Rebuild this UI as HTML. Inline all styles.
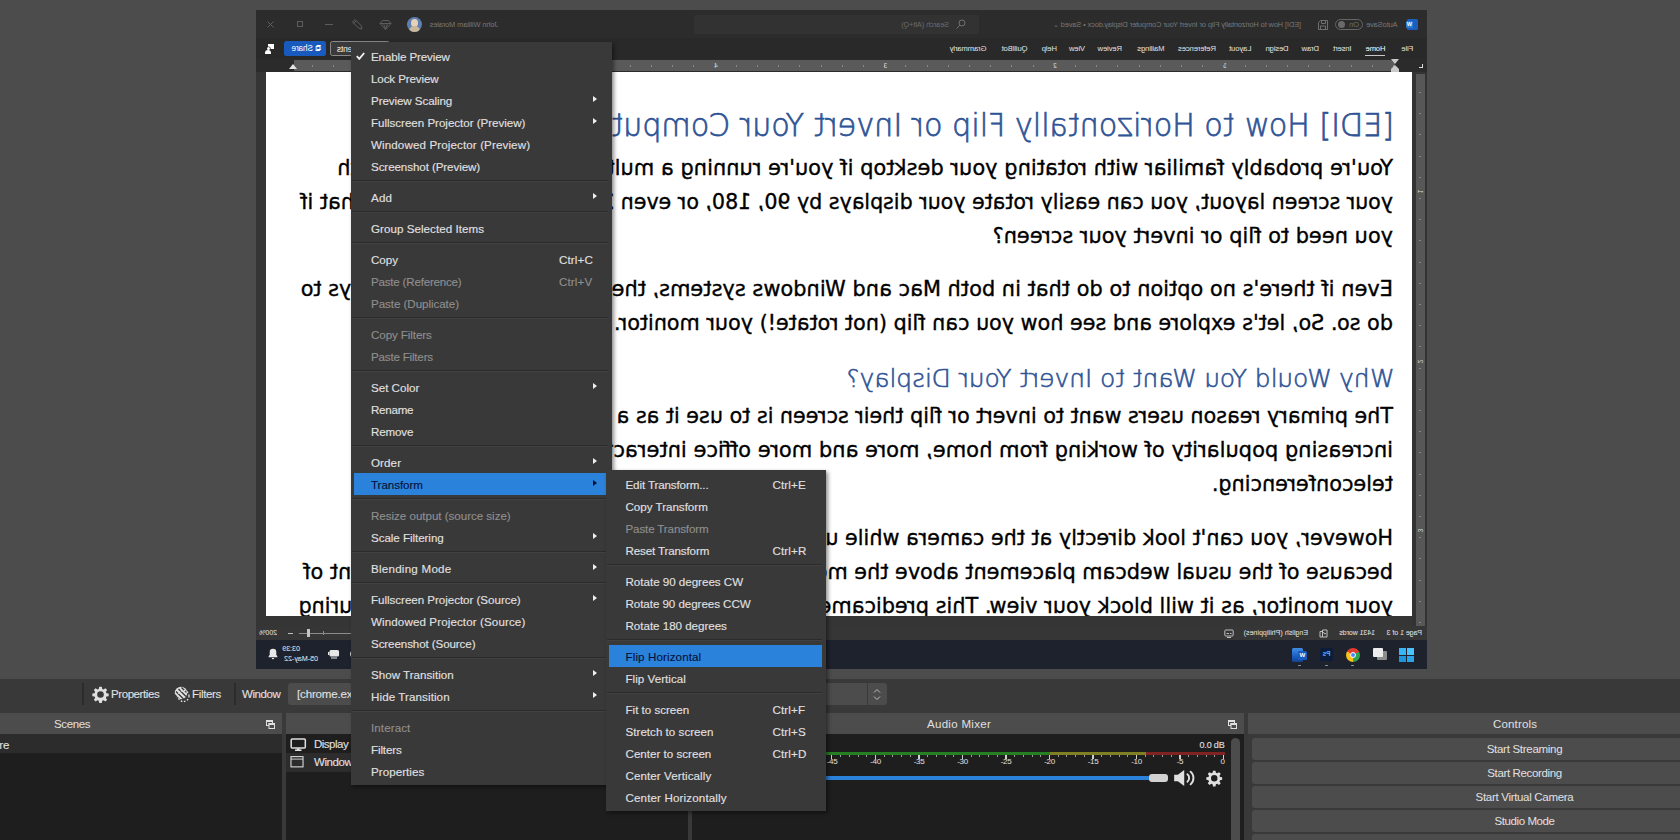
<!DOCTYPE html>
<html lang="en">
<head>
<meta charset="utf-8">
<title>OBS - Flip Horizontal</title>
<style>
*{box-sizing:border-box;margin:0;padding:0}
html,body{width:1680px;height:840px;overflow:hidden;background:#4c4c4c}
body{position:relative;font-family:"Liberation Sans",sans-serif;font-size:11.5px;color:#e1e0e1}
.abs{position:absolute}
/* ---------- mirrored Word window ---------- */
#word{position:absolute;left:256px;top:10px;width:1171px;height:659px;overflow:hidden;background:#353535;transform:scaleX(-1);transform-origin:50% 50%}
#word .tbar{position:absolute;left:0;top:0;width:1171px;height:28px;background:#2c2c2c}
#word .tabs{position:absolute;left:0;top:28px;width:1171px;height:21px;background:#292929}
#word .tab{position:absolute;top:6px;font-size:7.6px;line-height:10px;color:#e4e4e4;white-space:nowrap;letter-spacing:-0.1px}
#word .dim{color:#7d7d7d}
#word .rulerh{position:absolute;left:0;top:49px;width:1171px;height:13px;background:#2b2b2b}
#word .rulerh .lt{position:absolute;left:32px;top:1px;width:1101px;height:11px;background:#5a5a5a}
#word .rulerv{position:absolute;left:0;top:62px;width:15px;height:556px;background:#333}
#word .rulerv .lt{position:absolute;left:1.500px;top:2px;width:9.500px;height:554px;background:#575757}
#word .page{position:absolute;left:15px;top:62px;width:1146px;height:544px;background:#fff;overflow:hidden}
#word .ln{position:absolute;left:19px;white-space:nowrap;font-family:"DejaVu Sans","Liberation Sans",sans-serif;font-size:21.5px;line-height:34px;color:#000;transform-origin:0 50%;transform:scaleX(.967);-webkit-text-stroke:.38px #000}
#word .lnr{left:auto;transform-origin:100% 50%}
#word .h1{font-family:"DejaVu Sans Light","DejaVu Sans",sans-serif;font-weight:200;font-size:32px;line-height:44px;color:#2f5496;transform:scaleX(.941);-webkit-text-stroke:.75px #2f5496}
#word .h2{font-family:"DejaVu Sans Light","DejaVu Sans",sans-serif;font-weight:200;font-size:24px;line-height:36px;color:#2f5496;transform:scaleX(1.032);-webkit-text-stroke:.6px #2f5496}
#word .tt{position:absolute;top:9px;font-size:7.400px;line-height:11px;color:#787878;white-space:nowrap;letter-spacing:-.1px}
#word .rulerh span{position:absolute;top:2px;font-size:6.500px;line-height:9px;color:#d6d6d6;width:5px;text-align:center}
#word .rulerh .tk{position:absolute;left:32.600px;top:6px;width:1100px;height:2px;background:repeating-linear-gradient(90deg,#8a8a8a 0,#8a8a8a 1px,transparent 1px,transparent 21.200px)}
#word .rulerv span{position:absolute;left:3px;font-size:6.500px;line-height:9px;color:#d6d6d6;width:7px;text-align:center;transform:rotate(-90deg)}
#word .rulerv .tk{position:absolute;left:6px;top:20px;width:2px;height:540px;background:repeating-linear-gradient(180deg,#858585 0,#858585 1px,transparent 1px,transparent 21.200px)}
#word .tray{position:absolute;font-size:7.100px;line-height:9px;color:#f0f0f0;white-space:nowrap;text-align:right}
#word .status{position:absolute;left:0;top:616px;width:1171px;height:14px;background:#363636}
#word .status span{position:absolute;top:2px;font-size:7px;line-height:10px;color:#e6e6e6;white-space:nowrap;letter-spacing:-.05px}
#word .task{position:absolute;left:0;top:630px;width:1171px;height:29px;background:#1e222d}

/* ---------- OBS bottom UI ---------- */
#bottom{position:absolute;left:0;top:679px;width:1680px;height:161px;background:#3a3939}
.ttl{position:absolute;top:34px;height:21px;background:#4c4c4c;font-size:11.500px;line-height:23px;color:#e1e0e1;white-space:nowrap}
.ttl span{position:absolute;top:0}
.list{position:absolute;top:55px;height:106px;background:#1f1e1f}
.fl{position:absolute;top:7px;width:9px;height:9px}
.tbtxt{-webkit-text-stroke:.1px;position:absolute;top:8px;font-size:11.500px;line-height:14px;color:#e1e0e1;white-space:nowrap;letter-spacing:-.15px}
.cbtn{position:absolute;left:1252px;width:440px;height:22px;background:#4c4c4c;border-radius:3px}
.cbtn span{position:absolute;top:4px;font-size:11.500px;line-height:14px;white-space:nowrap;letter-spacing:-.2px;transform:translateX(-50%);left:272.500px}
.db{position:absolute;top:78px;font-size:8px;line-height:9px;color:#e1e0e1;transform:translateX(-50%);letter-spacing:-.3px}
/* ---------- menus ---------- */
.menu{-webkit-text-stroke:.12px;position:absolute;background:#3a3939;box-shadow:2px 2px 4px rgba(0,0,0,.45);padding:3px 0 2.500px 0;font-size:11.600px;letter-spacing:-.14px;color:#e1e0e1}
.mi{position:relative;height:22px;line-height:23px;padding-left:20px;white-space:nowrap}
.mi b{font-weight:normal}
.mi.d{color:#8f8f8f}
.mi.sel{background:#2a82da;color:#06103a;margin:0 4px 0 3px;padding-left:17px}
.mi .sc{position:absolute;top:0;letter-spacing:.12px}
.mi .ar{position:absolute;top:6.800px;width:0;height:0;border:3.700px solid transparent;border-left:4.800px solid #f0f0f0;border-right:0}
.sep{height:9px;position:relative}
.sep:after{content:"";position:absolute;left:1px;right:4px;top:3px;height:1px;background:#2c2b2b;border-bottom:1px solid #424141;box-sizing:content-box}
</style>
</head>
<body>

<!-- ======= captured (horizontally flipped) Word window ======= -->
<div id="word">

  <div class="tbar">
    <div class="abs" style="left:9px;top:9px;width:11px;height:11px;background:#1b5ebf;border-radius:1.5px"></div>
    <div class="abs" style="left:14px;top:11px;width:7px;height:7px;background:#2b7cd3;border-radius:1px;color:#fff;font-size:5.5px;line-height:7px;font-weight:bold;text-align:center">W</div>
    <span class="tt" style="left:29.5px">AutoSave</span>
    <div class="abs" style="left:64px;top:9px;width:28px;height:11px;border:1px solid #666;border-radius:6px"></div>
    <span class="tt" style="left:68px;color:#6e6e6e">On</span>
    <div class="abs" style="left:82px;top:11px;width:7px;height:7px;border-radius:50%;background:#6a6a6a"></div>
    <svg class="abs" style="left:98px;top:9px" width="12" height="12" viewBox="0 0 12 12" fill="none" stroke="#6f6f6f" stroke-width="1"><path d="M1.5 1.5h7l2 2v7h-9z"/><path d="M3.5 1.5v3h4v-3M3.5 10.5v-3.5h5v3.5"/></svg>
    <span class="tt" style="left:126px">[EDI] How to Horizontally Flip or Invert Your Computer Display.docx &#8226; Saved &#8964;</span>
    <div class="abs" style="left:448px;top:5px;width:285px;height:19px;background:#323232;border-radius:2px"></div>
    <svg class="abs" style="left:461px;top:9px" width="10" height="10" viewBox="0 0 10 10" fill="none" stroke="#707070" stroke-width="1"><circle cx="4" cy="4" r="3"/><path d="M6.2 6.2L9.5 9.5"/></svg>
    <span class="tt" style="left:478px;color:#6b6b6b">Search (Alt+Q)</span>
    <span class="tt" style="left:929px">John William Morales</span>
    <div class="abs" style="left:1005px;top:7px;width:15px;height:15px;border-radius:50%;background:#5f7fb3;overflow:hidden"><div class="abs" style="left:4px;top:2px;width:7px;height:8px;border-radius:50%;background:#e6d2b8"></div><div class="abs" style="left:2px;top:9px;width:11px;height:8px;border-radius:5px 5px 0 0;background:#c9b89a"></div></div>
    <svg class="abs" style="left:1035px;top:9px" width="13" height="12" viewBox="0 0 13 12" fill="none" stroke="#5c5c5c" stroke-width="1"><path d="M3.5 1.5h6l2.5 3-5.5 6-5.500-6z"/><path d="M1 4.500h11M4.500 4.500l2 6 2-6"/></svg>
    <svg class="abs" style="left:1063px;top:8px" width="13" height="13" viewBox="0 0 13 13" fill="none" stroke="#5c5c5c" stroke-width="1"><path d="M2 11l1-3.500 6-6 2.500 2.500-6 6z"/><path d="M8 3l2.500 2.500"/></svg>
    <div class="abs" style="left:1094px;top:14px;width:8px;height:1px;background:#5c5c5c"></div>
    <div class="abs" style="left:1124px;top:11px;width:6px;height:6px;border:1px solid #5c5c5c"></div>
    <svg class="abs" style="left:1152px;top:10px" width="9" height="9" viewBox="0 0 9 9" stroke="#606060" stroke-width="1"><path d="M1.500 1.500l6 6M7.500 1.500l-6 6"/></svg>
  </div>
  <div class="tabs">
    <span class="tab" style="left:13.7px">File</span>
    <span class="tab" style="left:41.6px;color:#fff">Home</span>
    <div class="abs" style="left:41.6px;top:16.5px;width:20.7px;height:1px;background:#c8c8c8"></div>
    <span class="tab" style="left:75.4px">Insert</span>
    <span class="tab" style="left:108px">Draw</span>
    <span class="tab" style="left:138.4px">Design</span>
    <span class="tab" style="left:175.6px">Layout</span>
    <span class="tab" style="left:211px">References</span>
    <span class="tab" style="left:262.6px">Mailings</span>
    <span class="tab" style="left:305px">Review</span>
    <span class="tab" style="left:342px">View</span>
    <span class="tab" style="left:370px">Help</span>
    <span class="tab" style="left:399.500px">QuillBot</span>
    <span class="tab" style="left:440.600px">Grammarly</span>
    <div class="abs" style="left:1037px;top:3px;width:60px;height:15px;border:1px solid #8a8a8a;border-radius:2.5px;background:#3a3a3a"></div>
    <span class="tab" style="left:1043.500px;color:#f2f2f2;font-size:8.300px">&#9633; Comments</span>
    <div class="abs" style="left:1101px;top:3px;width:42px;height:15px;border-radius:2.5px;background:#185abd"></div>
    <span class="tab" style="left:1106px;color:#fff;font-size:8.200px">&#10697; Share</span>
    <div class="abs" style="left:1153px;top:6px;width:6px;height:5px;background:#fff"></div>
    <div class="abs" style="left:1157px;top:9px;width:3px;height:3px;border-radius:50%;background:#fff;box-shadow:0 0 0 .6px #272727"></div>
    <div class="abs" style="left:1155.500px;top:12px;width:6px;height:3.500px;border-radius:3px 3px 0 0;background:#fff"></div>
  </div>
  <div class="rulerh"><div class="lt"></div><div class="tk"></div>
    <span style="left:199.500px">1</span><span style="left:369.500px">2</span><span style="left:539px">3</span><span style="left:708.500px">4</span><span style="left:878px">5</span><span style="left:1047.500px">6</span>
    <div class="abs" style="left:27.500px;top:0;border:4.500px solid transparent;border-top:5px solid #c9c9c9;border-bottom:0"></div>
    <div class="abs" style="left:27.500px;top:6px;border:4.500px solid transparent;border-bottom:4px solid #c9c9c9;border-top:0"></div>
    <div class="abs" style="left:28px;top:10px;width:8px;height:3px;background:#c9c9c9"></div>
    <div class="abs" style="left:1129.500px;top:5px;border:4.500px solid transparent;border-bottom:5px solid #e4e4e4;border-top:0"></div>
    <div class="abs" style="left:4px;top:5px;width:4px;height:4px;border-left:1.500px solid #ddd;border-bottom:1.500px solid #ddd"></div>
  </div>
  <div class="rulerv"><div class="lt"></div><div class="tk"></div>
    <span style="top:115px">1</span><span style="top:285px">2</span><span style="top:454px">3</span>
  </div>
  <div class="page">
    <div class="ln h1" style="top:31.400px;left:17.800px">[EDI] How to Horizontally Flip or Invert Your Computer Display</div>
    <div class="ln" style="top:79px;transform:scaleX(0.9760)">You're probably familiar with rotating your desktop if you're running a multi-monitor setup.</div>
    <div class="ln" style="top:113px;transform:scaleX(0.9570)">your screen layout, you can easily rotate your displays by 90, 180, or even 270 degrees.</div>
    <div class="ln" style="top:147px;transform:scaleX(0.9720)">you need to flip or invert your screen?</div>
    <div class="ln" style="top:200px;transform:scaleX(0.9736)">Even if there's no option to do that in both Mac and Windows systems, there are still</div>
    <div class="ln" style="top:234px;transform:scaleX(0.9640)">do so. So, let's explore and see how you can flip (not rotate!) your monitor.</div>
    <div class="ln h2" style="top:289.300px;left:17.500px">Why Would You Want to Invert Your Display?</div>
    <div class="ln" style="top:327px;transform:scaleX(0.9620)">The primary reason users want to invert or flip their screen is to use it as a teleprompter.</div>
    <div class="ln" style="top:361px;transform:scaleX(0.9770)">increasing popularity of working from home, more and more office interactions are held via</div>
    <div class="ln" style="top:395px">teleconferencing.</div>
    <div class="ln" style="top:449px;transform:scaleX(0.9643)">However, you can't look directly at the camera while using your script or notes</div>
    <div class="ln" style="top:483px">because of the usual webcam placement above the monitor. You can't place it in</div>
    <div class="ln" style="top:517px;transform:scaleX(0.9690)">your monitor, as it will block your view. This predicament makes it hard to keep</div>
    <div class="ln lnr" style="top:79px;right:71.700px">setup. With</div>
    <div class="ln lnr" style="top:113px;right:34.500px">But what if</div>
    <div class="ln lnr" style="top:200px;right:34.500px">several ways to</div>
    <div class="ln lnr" style="top:483px;right:37.700px">front of</div>
    <div class="ln lnr" style="top:517px;right:32.800px">focus during</div>
  </div>
  <div class="status">
    <span style="left:5px">Page 1 of 3</span>
    <span style="left:52px">1431 words</span>
    <svg class="abs" style="left:98.500px;top:2.500px" width="9" height="9" viewBox="0 0 9 9" fill="none" stroke="#cfcfcf" stroke-width=".9"><path d="M1 1h4.500v7H1zM5.500 2.500h2.500v5.500H5.500"/><path d="M2.200 4l1 1.200 1.500-2.200"/></svg>
    <span style="left:119px;letter-spacing:.05px">English (Philippines)</span>
    <svg class="abs" style="left:193px;top:2.500px" width="10" height="9" viewBox="0 0 10 9" fill="none" stroke="#cfcfcf" stroke-width=".9"><rect x=".8" y="1" width="8.400" height="6" rx="1"/><path d="M3 8.500h4M2.500 4.500h1.500M5 4.500h2.500"/></svg>
    <span style="left:1150px">200%</span>
    <div class="abs" style="left:1134px;top:6.500px;width:5px;height:1px;background:#bdbdbd"></div>
    <div class="abs" style="left:1040px;top:6.500px;width:88px;height:1px;background:#8c8c8c"></div>
    <div class="abs" style="left:1103px;top:5px;width:1px;height:4px;background:#8c8c8c"></div>
    <div class="abs" style="left:1116.500px;top:3px;width:3px;height:8px;background:#c4c4c4"></div>
  </div>
  <div class="task">
    <!-- start -->
    <div class="abs" style="left:13px;top:8px;width:7px;height:6.500px;background:#4cc2ff"></div><div class="abs" style="left:21px;top:8px;width:7px;height:6.500px;background:#39b4f6"></div>
    <div class="abs" style="left:13px;top:15.500px;width:7px;height:6.500px;background:#2aa5ea"></div><div class="abs" style="left:21px;top:15.500px;width:7px;height:6.500px;background:#1a97de"></div>
    <!-- task view -->
    <div class="abs" style="left:40px;top:11px;width:10px;height:9px;background:#8d8d8d;border-radius:1px"></div>
    <div class="abs" style="left:44px;top:8px;width:10px;height:9px;background:#ededed;border-radius:1px"></div>
    <!-- chrome -->
    <div class="abs" style="left:67px;top:7.500px;width:14px;height:14px;border-radius:50%;background:conic-gradient(from 60deg,#fbc116 0 120deg,#31a350 120deg 240deg,#e33b2e 240deg 360deg)"></div>
    <div class="abs" style="left:71px;top:11.500px;width:6px;height:6px;border-radius:50%;background:#4a8af4;border:1px solid #fff"></div>
    <div class="abs" style="left:72.500px;top:24.500px;width:3px;height:1.500px;border-radius:1px;background:#8e95a3"></div>
    <!-- ps -->
    <div class="abs" style="left:94px;top:8px;width:13px;height:12.500px;border-radius:2.500px;background:#0b1d3a;color:#55a8ff;font-size:6.500px;line-height:12.500px;font-weight:bold;text-align:center">Ps</div>
    <div class="abs" style="left:99px;top:24.500px;width:3px;height:1.500px;border-radius:1px;background:#8e95a3"></div>
    <!-- word -->
    <div class="abs" style="left:124px;top:7.500px;width:11px;height:14px;border-radius:1.500px;background:linear-gradient(#3f8fe6,#1b5ebf 60%,#12428f)"></div>
    <div class="abs" style="left:120px;top:10.500px;width:9px;height:9px;border-radius:1.500px;background:#185abd;color:#fff;font-size:6px;line-height:9px;font-weight:bold;text-align:center">W</div>
    <div class="abs" style="left:126px;top:24.500px;width:3px;height:1.500px;border-radius:1px;background:#8e95a3"></div>
    <!-- tray -->
    <span class="tray" style="left:1127px;top:4.500px">03:39</span>
    <span class="tray" style="left:1109px;top:14.500px">05-May-22</span>
    <svg class="abs" style="left:1149px;top:8px" width="10" height="12" viewBox="0 0 10 12" fill="#e8e8e8"><path d="M5 .8a3.300 3.300 0 0 0-3.300 3.300v2.700L.6 8.500v.7h8.800v-.7L8.300 6.800V4.100A3.300 3.300 0 0 0 5 .8zM3.800 10h2.400a1.200 1.200 0 0 1-2.400 0z"/></svg>
    <svg class="abs" style="left:1087px;top:9px" width="12" height="10" viewBox="0 0 12 10" fill="none" stroke="#e8e8e8" stroke-width="1.100"><rect x="1.500" y="1.500" width="8.500" height="5.500" rx="1" fill="#e8e8e8"/><path d="M10.500 3.500h1v2h-1M3 9h6"/></svg>
    <svg class="abs" style="left:1066px;top:8px" width="12" height="12" viewBox="0 0 12 12" fill="none" stroke="#e8e8e8" stroke-width="1"><path d="M1 4.500h2l2.500-2v7l-2.500-2H1z" fill="#e8e8e8"/><path d="M7.500 4a3 3 0 0 1 0 4M9 2.500a5 5 0 0 1 0 7"/></svg>
  </div>
</div>

<!-- ======= OBS toolbar + docks ======= -->
<div id="bottom">
  <!-- source toolbar -->
  <div class="abs" style="left:81.500px;top:4px;width:2px;height:22px;background:#2c2c2c"></div>
  <svg class="abs" style="left:92px;top:7px" width="17" height="17" viewBox="0 0 24 24"><path fill="#e1e0e1" fill-rule="evenodd" d="M10.200 1h3.600l.6 3.100 1.900.8 2.600-1.800 2.500 2.500-1.800 2.600.8 1.900 3.100.6v3.600l-3.100.6-.8 1.900 1.800 2.600-2.500 2.500-2.600-1.800-1.900.8-.6 3.100h-3.600l-.6-3.100-1.900-.8-2.600 1.800-2.500-2.500 1.800-2.600-.8-1.900-3.100-.6v-3.600l3.100-.6.8-1.900-1.800-2.600 2.500-2.500 2.600 1.800 1.900-.8zM12 7.300a4.700 4.700 0 1 0 0 9.400 4.700 4.700 0 0 0 0-9.400z"/></svg>
  <span class="tbtxt" style="left:111px;letter-spacing:-.42px">Properties</span>
  <svg class="abs" style="left:173px;top:7px" width="18" height="17" viewBox="0 0 18 17"><circle cx="8" cy="7" r="6.200" fill="#e1e0e1"/><g stroke="#3a3939" stroke-width="1.300"><path d="M3 5.500l7.500 7.500M5.500 3l7.500 7.500M1.500 8.500l5 5M8.500 1.500l5 5"/></g><circle cx="10.500" cy="10" r="5.500" fill="none" stroke="#e1e0e1" stroke-width="1.300" stroke-dasharray="1.600 1.600"/></svg>
  <span class="tbtxt" style="left:192px;letter-spacing:-.33px">Filters</span>
  <div class="abs" style="left:233.500px;top:4px;width:2px;height:22px;background:#2c2c2c"></div>
  <span class="tbtxt" style="left:242px;letter-spacing:-.4px">Window</span>
  <div class="abs" style="left:287.500px;top:4px;width:579px;height:22px;background:#4c4c4c;border-radius:3px 0 0 3px"></div>
  <span class="tbtxt" style="left:297px">[chrome.exe]: How to Horizontally Flip or Invert Your Computer Display - Google Docs</span>
  <div class="abs" style="left:867.500px;top:4px;width:19.500px;height:22px;background:#4c4c4c;border-radius:0 3px 3px 0"></div>
  <svg class="abs" style="left:872px;top:9px" width="10" height="13" viewBox="0 0 10 13" fill="none" stroke="#bdbdbd" stroke-width="1"><path d="M2 4.500l3-3 3 3M2 8.500l3 3 3-3"/></svg>

  <!-- Scenes dock -->
  <div class="ttl" style="left:0;width:282px"><span style="left:54px;letter-spacing:-.39px">Scenes</span>
    <svg class="fl" style="left:265.500px" viewBox="0 0 9 9"><rect x=".5" y=".5" width="6" height="5" fill="#4c4c4c" stroke="#e1e0e1"/><rect x="0" y="0" width="7" height="2" fill="#e1e0e1"/><rect x="3" y="3.500" width="5.500" height="5" fill="#4c4c4c" stroke="#e1e0e1"/><rect x="2.500" y="3" width="6.500" height="2" fill="#e1e0e1"/></svg></div>
  <div class="list" style="left:0;width:282px">
    <div class="abs" style="left:0;top:0;width:282px;height:19px;background:#2d2c2d"></div>
    <span class="tbtxt" style="left:-71px;top:4px;letter-spacing:-.1px">Display Capture</span>
  </div>
  <!-- Sources dock -->
  <div class="ttl" style="left:286px;width:402px"><span style="left:180px">Sources</span></div>
  <div class="list" style="left:286px;width:402px">
    <div class="abs" style="left:0;top:19px;width:402px;height:18.500px;background:#2d2c2d"></div>
    <svg class="abs" style="left:4px;top:4px" width="16.500" height="13.200" viewBox="0 0 17 14" fill="none" stroke="#e1e0e1"><rect x="1" y="1" width="15" height="9.500" rx="1" stroke-width="1.600"/><path d="M5 13h7" stroke-width="1.600"/><path d="M7 11h3v2h-3z" fill="#e1e0e1" stroke="none"/></svg>
    <span class="tbtxt" style="left:28px;top:2.800px;letter-spacing:-.5px">Display Capture</span>
    <svg class="abs" style="left:4px;top:22px" width="14" height="11.500" viewBox="0 0 15 13" fill="none" stroke="#e1e0e1"><rect x=".700" y=".700" width="13.600" height="11.600" stroke-width="1.200"/><path d="M.700 3.500h13.600" stroke-width="1"/></svg>
    <span class="tbtxt" style="left:28px;top:20.800px;letter-spacing:-.4px">Window Capture</span>
  </div>
  <!-- Audio Mixer dock -->
  <div class="ttl" style="left:692px;width:552px"><span style="left:235px;letter-spacing:.3px">Audio Mixer</span>
    <svg class="fl" style="left:536px" viewBox="0 0 9 9"><rect x=".5" y=".5" width="6" height="5" fill="#4c4c4c" stroke="#e1e0e1"/><rect x="0" y="0" width="7" height="2" fill="#e1e0e1"/><rect x="3" y="3.500" width="5.500" height="5" fill="#4c4c4c" stroke="#e1e0e1"/><rect x="2.500" y="3" width="6.500" height="2" fill="#e1e0e1"/></svg></div>
  <div class="list" style="left:692px;width:552px">
    <span class="tbtxt" style="left:8px;top:4px">Desktop Audio</span>
    <span class="tbtxt" style="right:19.500px;top:4px;font-size:9px;letter-spacing:-.17px">0.0 dB</span>
    <!-- meter (coords relative to list: x-692, y-734) -->
    <div class="abs" style="left:6px;top:18px;width:352px;height:3px;background:#267f23"></div>
    <div class="abs" style="left:358px;top:18px;width:96px;height:3px;background:#7f7f23"></div>
    <div class="abs" style="left:454px;top:18px;width:79px;height:3px;background:#7f2323"></div>
    <div class="abs" style="left:9.300px;top:21px;width:525px;height:2px;background:repeating-linear-gradient(90deg,#9c9c9c 0,#9c9c9c 1px,transparent 1px,transparent 8.700px)"></div>
    <div class="abs" style="left:9.300px;top:21px;width:525px;height:4px;background:repeating-linear-gradient(90deg,#d0d0d0 0,#d0d0d0 1px,transparent 1px,transparent 43.500px)"></div>
    <!-- fader -->
    <div class="abs" style="left:6px;top:42px;width:452px;height:4px;background:#2a82da;border-radius:2px"></div>
    <div class="abs" style="left:457px;top:39.500px;width:18.500px;height:8.500px;background:#d2d2d2;border-radius:3px"></div>
    <svg class="abs" style="left:479.500px;top:35px" width="25.500" height="18" viewBox="0 0 22 17"><path d="M1 5.500h3.500L10.500 1v15L4.500 11.500H1z" fill="#e1e0e1"/><path d="M13.500 5a4.500 4.500 0 0 1 0 7M16.500 2.500a8 8 0 0 1 0 12" fill="none" stroke="#e1e0e1" stroke-width="1.800" stroke-linecap="round"/></svg>
    <svg class="abs" style="left:514px;top:36px" width="16.500" height="16.500" viewBox="0 0 24 24"><path fill="#e1e0e1" fill-rule="evenodd" d="M10.200 1h3.600l.6 3.100 1.900.8 2.600-1.800 2.500 2.500-1.800 2.600.8 1.900 3.100.6v3.600l-3.100.6-.8 1.900 1.800 2.600-2.500 2.500-2.600-1.800-1.900.8-.6 3.100h-3.600l-.6-3.100-1.900-.8-2.600 1.800-2.500-2.500 1.800-2.600-.8-1.900-3.100-.6v-3.600l3.100-.6.8-1.900-1.800-2.600 2.500-2.500 2.600 1.800 1.900-.8zM12 7.300a4.700 4.700 0 1 0 0 9.400 4.700 4.700 0 0 0 0-9.400z"/></svg>
    <!-- scrollbar -->
    <div class="abs" style="left:539px;top:3.500px;width:9px;height:120px;background:#4c4c4c;border-radius:4.500px"></div>
  </div>
  <!-- Controls dock -->
  <div class="ttl" style="left:1247.500px;width:536px"><span style="left:245.500px;letter-spacing:.16px">Controls</span></div>
</div>
<!-- meter labels (absolute page coords) -->
<div id="dbs">
<span class="db" style="left:1222.500px;top:757px">0</span><span class="db" style="left:1180px;top:757px">-5</span><span class="db" style="left:1136.500px;top:757px">-10</span><span class="db" style="left:1093px;top:757px">-15</span><span class="db" style="left:1049.500px;top:757px">-20</span><span class="db" style="left:1006px;top:757px">-25</span><span class="db" style="left:962.500px;top:757px">-30</span><span class="db" style="left:919px;top:757px">-35</span><span class="db" style="left:875.500px;top:757px">-40</span><span class="db" style="left:832px;top:757px">-45</span><span class="db" style="left:788.500px;top:757px">-50</span><span class="db" style="left:745px;top:757px">-55</span><span class="db" style="left:701.500px;top:757px">-60</span>
</div>
<div class="cbtn" style="top:738px"><span style="letter-spacing:-.29px">Start Streaming</span></div>
<div class="cbtn" style="top:762px"><span style="letter-spacing:-.36px">Start Recording</span></div>
<div class="cbtn" style="top:786px"><span style="letter-spacing:-.31px">Start Virtual Camera</span></div>
<div class="cbtn" style="top:810px"><span style="letter-spacing:-.42px">Studio Mode</span></div>
<div class="cbtn" style="top:834px"><span>Settings</span></div>

<!-- ======= context menu ======= -->
<div class="menu" id="m1" style="left:351px;top:42px;width:260.500px">
  <div class="mi"><svg class="abs" style="left:5px;top:7px" width="9" height="8" viewBox="0 0 9 8"><path d="M.8 4.200l2.500 2.600L8.200 1" fill="none" stroke="#f0f0f0" stroke-width="1.900"/></svg><b style="letter-spacing:-0.133px">Enable Preview</b></div>
  <div class="mi"><b style="letter-spacing:-0.113px">Lock Preview</b></div>
  <div class="mi"><b style="letter-spacing:-0.086px">Preview Scaling</b><i class="ar" style="left:241.500px"></i></div>
  <div class="mi"><b style="letter-spacing:-0.029px">Fullscreen Projector (Preview)</b><i class="ar" style="left:241.500px"></i></div>
  <div class="mi"><b style="letter-spacing:0.114px">Windowed Projector (Preview)</b></div>
  <div class="mi"><b style="letter-spacing:-0.086px">Screenshot (Preview)</b></div>
  <div class="sep"></div>
  <div class="mi"><b style="letter-spacing:0.186px">Add</b><i class="ar" style="left:241.500px"></i></div>
  <div class="sep"></div>
  <div class="mi"><b style="letter-spacing:0.043px">Group Selected Items</b></div>
  <div class="sep"></div>
  <div class="mi"><b style="letter-spacing:-0.045px">Copy</b><span class="sc" style="left:208px">Ctrl+C</span></div>
  <div class="mi d"><b style="letter-spacing:-0.211px">Paste (Reference)</b><span class="sc" style="left:208px">Ctrl+V</span></div>
  <div class="mi d"><b style="letter-spacing:-0.055px">Paste (Duplicate)</b></div>
  <div class="sep"></div>
  <div class="mi d"><b style="letter-spacing:-0.088px">Copy Filters</b></div>
  <div class="mi d"><b style="letter-spacing:-0.195px">Paste Filters</b></div>
  <div class="sep"></div>
  <div class="mi"><b style="letter-spacing:-0.003px">Set Color</b><i class="ar" style="left:241.500px"></i></div>
  <div class="mi"><b style="letter-spacing:-0.255px">Rename</b></div>
  <div class="mi"><b style="letter-spacing:-0.145px">Remove</b></div>
  <div class="sep"></div>
  <div class="mi"><b style="letter-spacing:0.092px">Order</b><i class="ar" style="left:241.500px"></i></div>
  <div class="mi sel"><b style="letter-spacing:-0.056px">Transform</b><i class="ar" style="left:238.500px;border-left-color:#06103a"></i></div>
  <div class="sep"></div>
  <div class="mi d"><b style="letter-spacing:-0.029px">Resize output (source size)</b></div>
  <div class="mi"><b style="letter-spacing:-0.051px">Scale Filtering</b><i class="ar" style="left:241.500px"></i></div>
  <div class="sep"></div>
  <div class="mi"><b style="letter-spacing:0.242px">Blending Mode</b><i class="ar" style="left:241.500px"></i></div>
  <div class="sep"></div>
  <div class="mi"><b style="letter-spacing:-0.037px">Fullscreen Projector (Source)</b><i class="ar" style="left:241.500px"></i></div>
  <div class="mi"><b style="letter-spacing:0.110px">Windowed Projector (Source)</b></div>
  <div class="mi"><b style="letter-spacing:-0.101px">Screenshot (Source)</b></div>
  <div class="sep"></div>
  <div class="mi"><b style="letter-spacing:0.013px">Show Transition</b><i class="ar" style="left:241.500px"></i></div>
  <div class="mi"><b style="letter-spacing:0.090px">Hide Transition</b><i class="ar" style="left:241.500px"></i></div>
  <div class="sep"></div>
  <div class="mi d"><b style="letter-spacing:0.091px">Interact</b></div>
  <div class="mi"><b style="letter-spacing:-0.123px">Filters</b></div>
  <div class="mi"><b style="letter-spacing:0.046px">Properties</b></div>
</div>

<!-- ======= Transform submenu ======= -->
<div class="menu" id="m2" style="left:605.500px;top:470px;width:220px">
  <div class="mi"><b style="letter-spacing:-0.120px">Edit Transform...</b><span class="sc" style="left:167px">Ctrl+E</span></div>
  <div class="mi"><b style="letter-spacing:-0.013px">Copy Transform</b></div>
  <div class="mi d"><b style="letter-spacing:-0.138px">Paste Transform</b></div>
  <div class="mi"><b style="letter-spacing:-0.134px">Reset Transform</b><span class="sc" style="left:167px">Ctrl+R</span></div>
  <div class="sep"></div>
  <div class="mi"><b style="letter-spacing:-0.017px">Rotate 90 degrees CW</b></div>
  <div class="mi"><b style="letter-spacing:-0.058px">Rotate 90 degrees CCW</b></div>
  <div class="mi"><b style="letter-spacing:-0.025px">Rotate 180 degrees</b></div>
  <div class="sep"></div>
  <div class="mi sel"><b style="letter-spacing:0.113px">Flip Horizontal</b></div>
  <div class="mi"><b style="letter-spacing:0.037px">Flip Vertical</b></div>
  <div class="sep"></div>
  <div class="mi"><b style="letter-spacing:-0.007px">Fit to screen</b><span class="sc" style="left:167px">Ctrl+F</span></div>
  <div class="mi"><b style="letter-spacing:0.021px">Stretch to screen</b><span class="sc" style="left:167px">Ctrl+S</span></div>
  <div class="mi"><b style="letter-spacing:0.005px">Center to screen</b><span class="sc" style="left:167px">Ctrl+D</span></div>
  <div class="mi"><b style="letter-spacing:0.081px">Center Vertically</b></div>
  <div class="mi"><b style="letter-spacing:0.137px">Center Horizontally</b></div>
</div>

</body>
</html>
